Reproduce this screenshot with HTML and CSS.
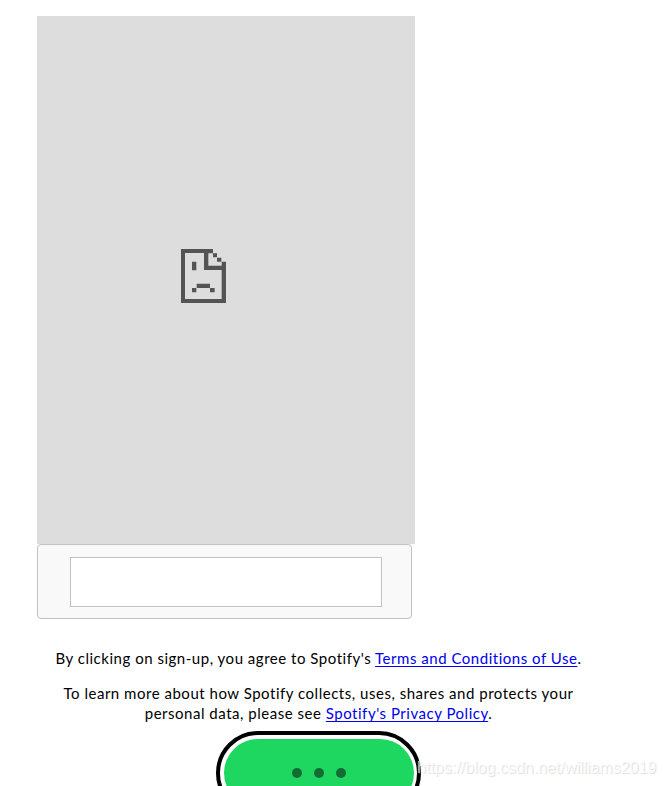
FILE: index.html
```
<!DOCTYPE html>
<html lang="en">
<head>
  <meta charset="UTF-8">
  <meta name="viewport" content="width=device-width, initial-scale=1.0">
  <title>Sign up</title>
  <link rel="stylesheet" href="styles.css">
</head>
<body>
  <div class="container">
    <div class="frame">
      <svg class="sad-icon" viewBox="0 0 135 162">
        <path fill="#545454" fill-rule="evenodd" d="M0 0H96V13H82V50H122V38H135V162H0ZM12 12V150H122V63H69V12Z"/>
        <path fill="#545454" d="M96 13h12v12h-12zM108 26h13v12h-13zM33 38h13v26h-13zM33 117h13v13h-13zM47 104h40v13h-40zM87 117h14v13h-14z"/>
      </svg>
    </div>
    <div class="captcha">
      <div class="captcha-field"></div>
    </div>

    <div class="terms">
      <p>By clicking on sign-up, you agree to Spotify's <a href="#">Terms and Conditions of Use</a>.</p>
      <p class="learn">To learn more about how Spotify collects, uses, shares and protects your<br>personal data, please see <a href="#">Spotify's Privacy Policy</a>.</p>
    </div>

    <button class="signup" aria-label="Loading">
      <span class="signup-inner">
        <span class="dot"></span>
        <span class="dot"></span>
        <span class="dot"></span>
      </span>
    </button>
  </div>
  <div class="watermark">https://blog.csdn.net/williams2019</div>
</body>
</html>
```

FILE: styles.css
```
* {
  margin: 0;
  padding: 0;
  box-sizing: border-box;
}

body {
  background: #fff;
  color: #000;
  font-family: Lato, sans-serif;
  height: 786px;
  overflow: hidden;
  position: relative;
}

.container {
  width: 563px;
  margin-left: 37px;
  padding-top: 16px;
}

.frame {
  width: 378px;
  height: 528px;
  background: #ddd;
  padding: 233px 0 0 144px;
}

.sad-icon {
  display: block;
  width: 45px;
  height: 54px;
}

.captcha {
  width: 375px;
  height: 75px;
  background: #f9f9f9;
  border: 1px solid #c1c1c1;
  border-radius: 4px;
  padding: 12px 0 0 32px;
}

.captcha-field {
  width: 312px;
  height: 50px;
  background: #fff;
  border: 1px solid #c1c1c1;
}

.terms {
  margin-top: 29px;
  font-size: 15px;
  line-height: 20px;
  letter-spacing: 0.52px;
  text-align: center;
  white-space: nowrap;
}

.learn {
  margin-top: 15px;
}

a {
  color: #0000ee;
  text-decoration: underline;
  text-decoration-skip-ink: none;
  text-underline-offset: 2px;
}

.signup {
  display: block;
  width: 205px;
  height: 84px;
  margin: 8px auto 0;
  padding: 4px;
  border: 4px solid #000;
  border-radius: 42px;
  background: #fff;
}

.signup-inner {
  display: flex;
  justify-content: center;
  align-items: center;
  gap: 12px;
  height: 100%;
  margin-right: -1px;
  border-radius: 34px;
  background: #1ed760;
}

.dot {
  width: 10px;
  height: 10px;
  border-radius: 50%;
  background: #116d31;
}

.watermark {
  position: absolute;
  left: 417px;
  top: 758px;
  font-family: "Liberation Sans", Arial, sans-serif;
  font-size: 16px;
  line-height: 20px;
  color: rgba(255, 255, 255, 0.75);
  text-shadow: 1px 1px 1px rgba(180, 180, 180, 0.45);
}
```
